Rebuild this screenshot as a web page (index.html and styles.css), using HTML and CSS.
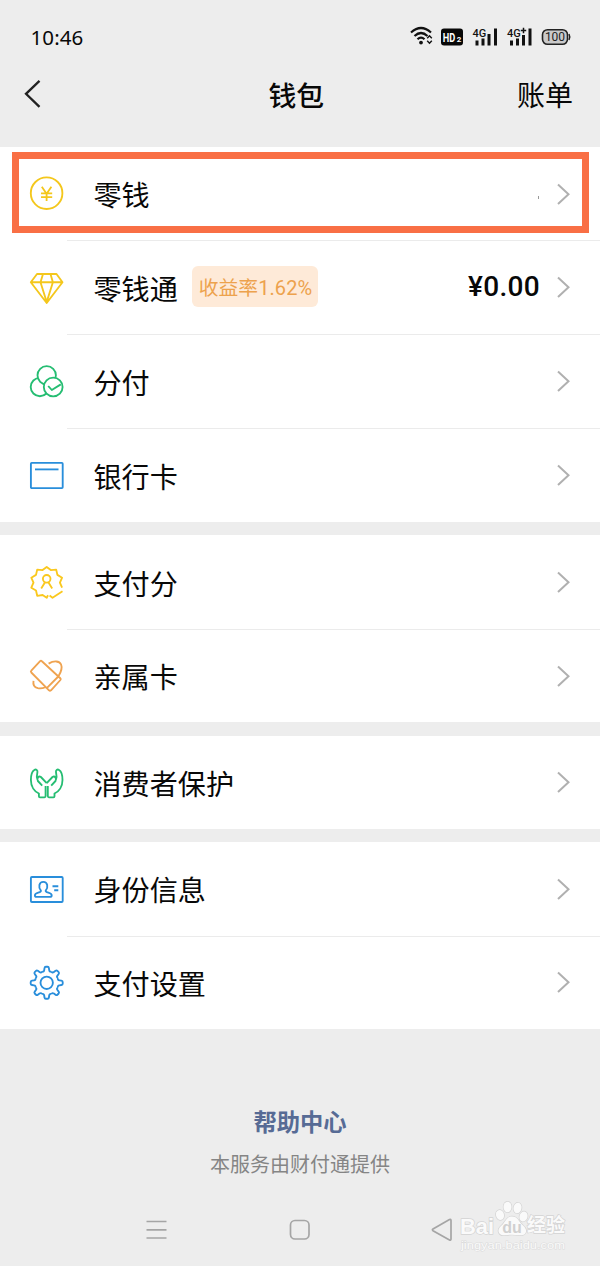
FILE: index.html
```html
<!DOCTYPE html>
<html lang="zh-CN">
<head>
<meta charset="utf-8">
<title>钱包</title>
<link rel="stylesheet" href="styles.css">
</head>
<body>
<svg class="defs" aria-hidden="true">
  <symbol id="chevron" viewBox="0 0 14 24"><path d="M2 2.500 12.500 12.200 2 22" fill="none" stroke="#b0b0b0" stroke-width="2"/></symbol>
</svg>
<div class="screen">
  <header class="top">
    <div class="status">
      <time class="clock">10:46</time>
      <svg class="status-icons" width="162" height="24" viewBox="0 0 162 24">
        <g fill="none" stroke="#111" stroke-width="2.2">
          <path d="M1 7.5Q11-1.5 21 7.5M4.5 11Q11 5 17.5 11M7.5 14.3Q11 11 14.5 14.3"/>
          <path d="M17.2 13.2 19.5 10.8 21.8 13.2M17.2 15.8 19.5 18.2 21.8 15.8" stroke-width="1.4"/>
        </g>
        <circle cx="11" cy="17.6" r="1.9" fill="#111"/>
        <rect x="31" y="3.500" width="22" height="17" rx="3" fill="#080808"/>
        <text x="32.800" y="16.500" class="hd" textLength="12.500" lengthAdjust="spacingAndGlyphs">HD</text><text x="46.800" y="16.500" class="hd-sub">2</text>
        <g fill="#111">
          <path d="M65.5 15.500h3v5h-3zM71.5 13.500h3v7h-3zM77.5 9h3v11.500h-3zM84 3.500h3v17h-3z"/>
          <path d="M100 15.500h3v5h-3zM106 13.500h3v7h-3zM112 10h3v10.500h-3zM118.500 3.500h3v17h-3z"/>
        </g>
        <text x="62.500" y="12" class="net">4G</text>
        <text x="97" y="12" class="net">4G</text><path d="M110.800 5.500h5.400M113.500 2.800v5.400" stroke="#111" stroke-width="1.500"/>
        <rect x="132.500" y="4.700" width="25" height="14.600" rx="5" fill="#cacaca" stroke="#222" stroke-width="1.600"/>
        <path d="M159 9q1.600 3 0 6" fill="none" stroke="#222" stroke-width="1.500"/>
        <text x="145" y="16.400" text-anchor="middle" class="battery">100</text>
      </svg>
    </div>
    <nav class="bar">
      <svg class="back" width="20" height="30" viewBox="0 0 20 30"><path d="M17.500 1.800 4 14.800 17.500 27.800" fill="none" stroke="#222" stroke-width="2.300"/></svg>
      <h1 class="title">钱包</h1>
      <a class="bill">账单</a>
    </nav>
  </header>

  <main class="groups">
    <section class="group">
      <div class="row featured">
        <svg class="icon yellow" viewBox="0 0 34 34"><circle cx="16.600" cy="16.200" r="15.800"/><path d="m11.800 9.700 4.800 7 4.800-7M16.600 16.700v7.200M11 16.400h11.200M11 20.200h11.200" stroke-width="1.800"/></svg>
        <div class="cell"><span class="label">零钱</span><i class="speck"></i><svg class="go"><use href="#chevron"/></svg></div>
      </div>
      <div class="row">
        <svg class="icon yellow" viewBox="0 0 34 34"><path d="M7 3h19.500L32.500 11.200 16.700 32 .8 11.200zM.8 11.200h31.700M13 3l-2.500 8.200L16.700 31l6.200-19.800L20.500 3"/></svg>
        <div class="cell"><span class="label">零钱通</span><span class="tag">收益率<b>1.62%</b></span><span class="amount">¥0.00</span><svg class="go"><use href="#chevron"/></svg></div>
      </div>
      <div class="row">
        <svg class="icon green" viewBox="0 0 34 34"><circle cx="9.900" cy="22" r="9.200"/><circle cx="16.700" cy="10.300" r="9.200" fill="#fff"/><circle cx="23.200" cy="22" r="9.400" fill="#fff"/><path d="m18.200 21 3.600 4 9-5.600"/></svg>
        <div class="cell"><span class="label">分付</span><svg class="go"><use href="#chevron"/></svg></div>
      </div>
      <div class="row">
        <svg class="icon blue" viewBox="0 0 34 34"><rect x=".9" y="3.900" width="31.800" height="25.200" rx=".8"/><path d="M5 10.400h23.500"/></svg>
        <div class="cell"><span class="label">银行卡</span><svg class="go"><use href="#chevron"/></svg></div>
      </div>
    </section>

    <section class="group">
      <div class="row">
        <svg class="icon gold" viewBox="0 0 34 34"><path d="M18 29.300 16.700 31.800 12.600 29 7.200 29.800 6 24.500 1.300 21.700 3.500 16.700 1.300 11.700 6 8.900 7.200 3.600 12.600 4.100 16.700.9 20.800 4.100 26.200 3.600 27.400 8.900 32.100 11.700 29.900 16.700 32.100 21.700"/><path d="m19.600 29.500 2.900 2.200 10-6.400"/><circle cx="16.700" cy="12.800" r="3.800"/><path d="m11.200 22.500 3.700-5.900M22.200 22.500l-3.700-5.900"/></svg>
        <div class="cell"><span class="label">支付分</span><svg class="go"><use href="#chevron"/></svg></div>
      </div>
      <div class="row">
        <svg class="icon orange" viewBox="0 0 34 34"><path d="M10.100 2.100Q11 1.300 11.900 2.200L30.300 19.200Q31.200 20 30.400 21L21 31.300Q20 32.200 19 31.300L1.300 13.500Q.4 12.500 1.300 11.600zM17 28.800 28.300 17.500M18.600 4.600C24 1.400 29.500 1.800 31.100 5.500 32.500 9 30.700 13.500 28.600 17M3.500 21.800C2.900 25.200 4.200 28.300 7.800 29.200 10.700 29.800 13.400 29.100 15.800 28"/></svg>
        <div class="cell"><span class="label">亲属卡</span><svg class="go"><use href="#chevron"/></svg></div>
      </div>
    </section>

    <section class="group">
      <div class="row">
        <svg class="icon green" viewBox="0 0 34 34"><path id="hand" d="M15.600 20V30.100Q15.600 31.300 14.500 31.300H10Q8.900 31.300 8.900 30.200V27.500C4.500 25.500.9 20.500.9 14 .9 9.500 1.900 5.500 4.300 4 6.100 2.800 7.900 4.200 7.400 6.200 6.600 9.500 6.500 11.500 7.500 13.600M12.200 19.600 7.900 15C6.500 12.500 8.500 9.500 10.900 11L16.700 17.200"/><use href="#hand" transform="matrix(-1 0 0 1 33.400 0)"/></svg>
        <div class="cell"><span class="label">消费者保护</span><svg class="go"><use href="#chevron"/></svg></div>
      </div>
    </section>

    <section class="group">
      <div class="row">
        <svg class="icon blue" viewBox="0 0 34 34"><rect x=".9" y="4" width="31.800" height="25" rx="1"/><path d="M10.900 17.700C8.100 14.200 8.900 8.900 13.300 8.900S18.500 14.200 15.700 17.700C15.200 19.900 21.700 19.500 21.700 22.200Q21.700 23.900 20 23.900H6.500Q4.900 23.900 4.900 22.200C4.900 19.500 11.400 19.900 10.900 17.700zM22.500 13.200h5.800M24.200 17.200h4.100"/></svg>
        <div class="cell"><span class="label">身份信息</span><svg class="go"><use href="#chevron"/></svg></div>
      </div>
      <div class="row">
        <svg class="icon blue" viewBox="0 0 34 34"><g transform="translate(16.700 16.800)"><circle r="6.200"/><g id="quarter"><path id="tooth" d="M-4.700-11.300C-3.300-10.800-2.700-11.500-2.500-12.700L-2.200-14.700Q-2-16-.9-16H.9Q2-16 2.200-14.700L2.500-12.700C2.700-11.500 3.300-10.800 4.700-11.300"/><use href="#tooth" transform="rotate(45)"/></g><use href="#quarter" transform="rotate(90)"/><use href="#quarter" transform="rotate(180)"/><use href="#quarter" transform="rotate(270)"/></g></svg>
        <div class="cell"><span class="label">支付设置</span><svg class="go"><use href="#chevron"/></svg></div>
      </div>
    </section>
  </main>

  <footer class="footer">
    <a class="help">帮助中心</a>
    <p class="provider">本服务由财付通提供</p>
    <div class="system-nav">
      <svg width="22" height="22" viewBox="0 0 22 22"><path d="M.5 2.500h20M.5 10.800h20M.5 19h20"/></svg>
      <svg width="22" height="22" viewBox="0 0 22 22"><rect x="1.500" y="1.500" width="18.500" height="18.500" rx="4.500"/></svg>
      <svg width="22" height="24" viewBox="0 0 22 24"><path d="M17.500 1.500Q19 .8 19 2.500V21Q19 22.700 17.500 22L1 12.700Q-.2 11.800 1 10.900z"/></svg>
    </div>
    <svg class="watermark" width="112" height="54" viewBox="0 0 112 54">
      <g fill="#fafafa" stroke="#d4d4d4" stroke-width="1.400" paint-order="stroke">
        <text x="1" y="32.700" class="wm-main" textLength="34" lengthAdjust="spacingAndGlyphs">Bai</text>
        <ellipse cx="41" cy="14" rx="4" ry="5" transform="rotate(-15 41 14)"/><ellipse cx="48.500" cy="6" rx="4" ry="5.300"/><ellipse cx="58.500" cy="7" rx="4" ry="5.300" transform="rotate(12 58.500 7)"/><ellipse cx="64.500" cy="15.500" rx="4" ry="5" transform="rotate(18 64.500 15.500)"/>
        <path d="M53 15.500C47 15.500 47 21 42 25 37 29.500 40 35 46 34.300Q53 33 60 34.300C68 35 69 28.500 64 24.500 59 20 59 15.500 53 15.500z"/>
        <text x="68" y="31" class="wm-cn">经验</text>
      </g>
      <text x="53" y="31.500" text-anchor="middle" class="wm-du">du</text>
      <text x="2" y="48" class="wm-url" textLength="104" lengthAdjust="spacingAndGlyphs">jingyan.baidu.com</text>
    </svg>
  </footer>
</div>
</body>
</html>
```
FILE: styles.css
```css
*, *::after { box-sizing: border-box; }
body { margin: 0; background: #ededed; font-family: "Noto Sans CJK SC", sans-serif; color: #080808; }
.defs { position: absolute; width: 0; height: 0; }
.screen { width: 600px; height: 1266px; overflow: hidden; }
.top { height: 146.6px; padding-top: 24px; }
.status { display: flex; justify-content: space-between; align-items: center; height: 28px; padding: 0 28px 0 30.5px; }
.clock { margin-top: -2px; font: 20.5px/28px "Noto Sans", sans-serif; letter-spacing: .1px; }
.status-icons { margin-top: -2px; }
.hd { font: bold 12px Roboto, sans-serif; fill: #fff; }
.hd-sub { font: bold 8px Roboto, sans-serif; fill: #fff; }
.net { font: 500 11px Roboto, sans-serif; fill: #111; }
.battery { font: 12px Roboto, sans-serif; fill: #222; }
.bar { display: grid; grid-template-columns: 1fr auto 1fr; align-items: center; height: 84px; padding: 0 27px 0 22px; }
.title { margin: 0 0 0 -2.5px; font-size: 27.8px; font-weight: 500; line-height: 40px; }
.bill { justify-self: end; font-size: 28px; line-height: 40px; }
.groups { display: grid; gap: 13.2px; }
.group { background: #fff; }
.row { position: relative; display: flex; align-items: center; height: 93.5px; padding-left: 30px; }
.group:first-child .row { height: 93.9px; }
.icon { flex: none; width: 34px; height: 34px; margin: 1.4px 3px 0 0; fill: none; stroke: currentColor; stroke-width: 1.85; stroke-linejoin: round; overflow: visible; }
.yellow { color: #f4c71c; }
.gold { color: #fac81e; }
.green { color: #25bd72; }
.blue { color: #298edb; }
.orange { color: #efa350; }
.cell { flex: 1; display: flex; align-items: center; height: 100%; padding: 0 30px 1px 26.5px; border-top: 1px solid #ebebeb; }
.row:first-child .cell { border-top-color: transparent; }
.label { font-size: 28.1px; line-height: 40px; padding-top: 1px; }
.go { width: 14px; height: 24px; margin-left: auto; }
.featured::after { content: ""; position: absolute; left: 12px; top: 5.4px; width: 577px; height: 81px; border: 7px solid #f96f45; }
.speck { width: 1px; height: 3px; margin: 8px 17px 0 auto; background: #999; }
.speck + .go, .amount + .go { margin-left: 0; }
.tag { height: 41px; margin: -1px 0 0 14px; padding: 0 6px 0 7px; border-radius: 6px; background: #feead8; color: #eda24d; font-size: 19.8px; line-height: 41px; white-space: nowrap; }
.tag b { font: 20px Roboto, sans-serif; letter-spacing: .1px; }
.amount { margin: 0 16px 0 auto; font: 500 28px/40px Roboto, sans-serif; letter-spacing: .3px; }
.footer { position: relative; display: flex; flex-direction: column; align-items: center; height: 237px; padding-top: 74.5px; }
.help { color: #576b95; font-size: 23.3px; font-weight: 700; line-height: 34px; }
.provider { margin: 13px 0 0; color: #858585; font-size: 20px; line-height: 26px; }
.system-nav { display: flex; justify-content: space-between; align-items: center; width: 308px; height: 24px; margin-top: 41px; fill: none; stroke: #a5a5a5; stroke-width: 1.7; }
.system-nav svg { overflow: visible; }
.watermark { position: absolute; left: 459px; top: 172px; overflow: visible; }
.wm-main { font: bold 22px "Liberation Sans", sans-serif; }
.wm-cn { font: bold 19px "Noto Sans CJK SC", sans-serif; }
.wm-du { font: bold 16px "Liberation Sans", sans-serif; fill: #d0d0d0; }
.wm-url { font: 11px "Liberation Sans", sans-serif; fill: #fafafa; stroke: #dcdcdc; stroke-width: 1px; paint-order: stroke; }
```
